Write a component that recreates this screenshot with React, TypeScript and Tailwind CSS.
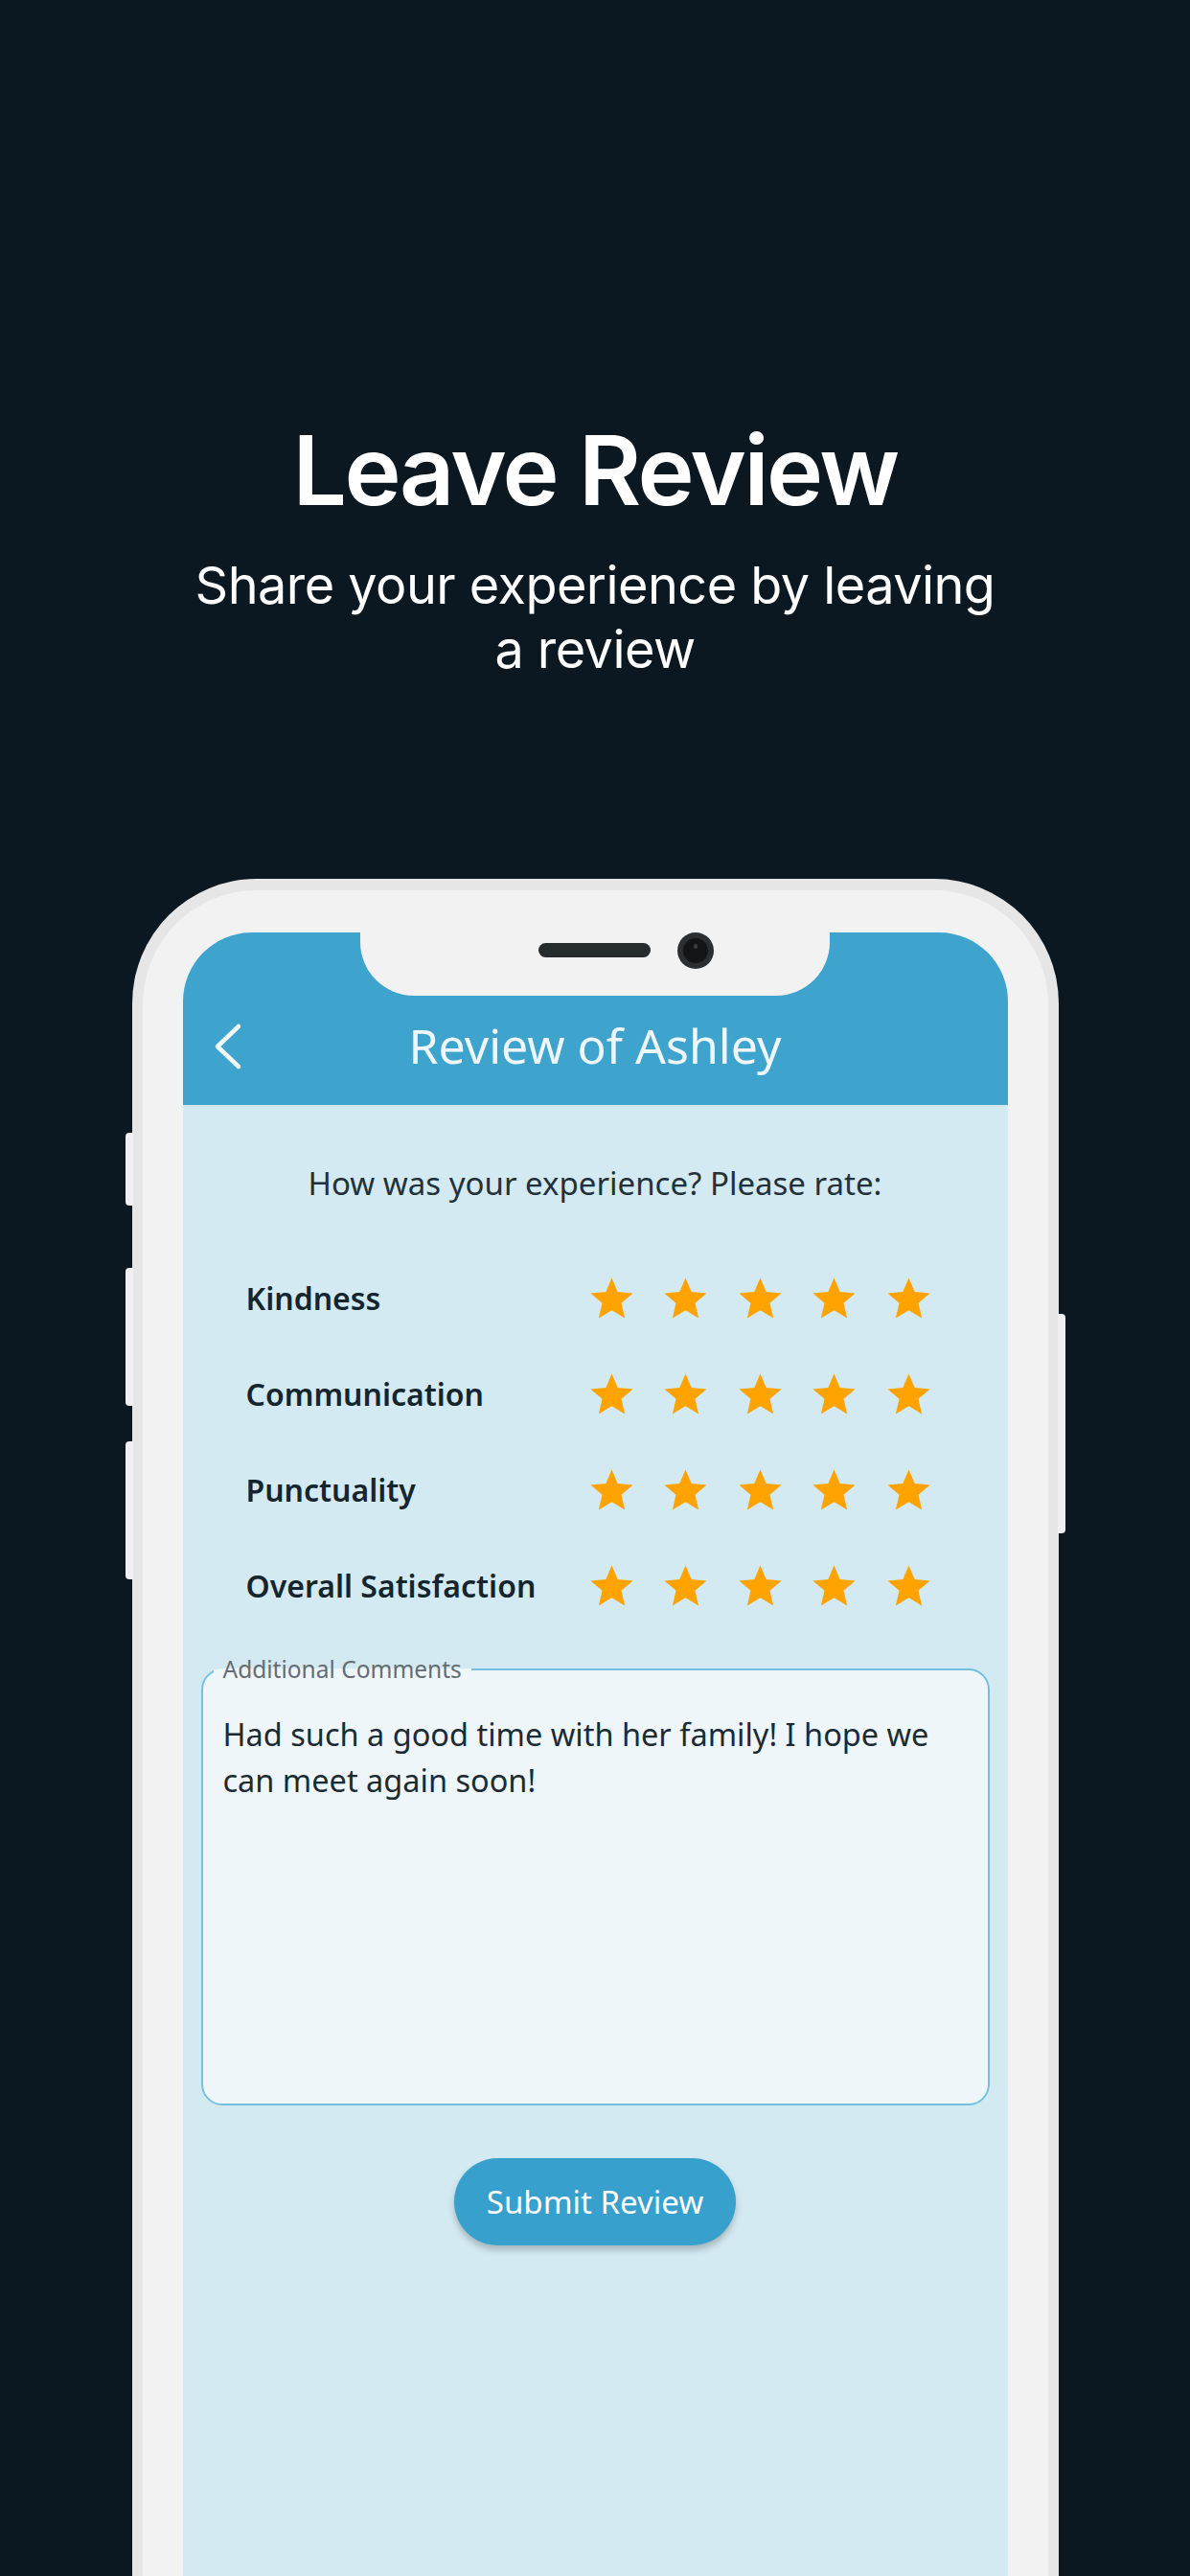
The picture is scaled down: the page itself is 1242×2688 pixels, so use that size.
import React from "react";

const ratings = ["Kindness", "Communication", "Punctuality", "Overall Satisfaction"];

const Star = () => (
  <svg width="53" height="53" viewBox="0 0 24 24" className="shrink-0">
    <path
      fill="#ffa300"
      d="M12 17.27L18.18 21l-1.64-7.03L22 9.24l-7.19-.61L12 2 9.19 8.63 2 9.24l5.46 4.73L5.82 21z"
    />
  </svg>
);

const RatingRow = ({ label }: { label: string }) => (
  <div className="flex h-[100px] items-center justify-between pl-[66px] pr-[77px]">
    <span className="text-[32px] font-semibold text-[#15252e]">{label}</span>
    <div className="flex gap-[24.5px]">
      {[0, 1, 2, 3, 4].map((i) => (
        <Star key={i} />
      ))}
    </div>
  </div>
);

const Notch = () => (
  <div className="absolute left-1/2 top-0 z-10 flex h-[66px] w-[490px] -translate-x-1/2 items-start justify-center rounded-b-[56px] bg-[#f2f2f2] pl-[64px]">
    <div className="mt-[11px] h-[15px] w-[117px] rounded-full bg-[#262b2e]" />
    <div className="ml-[28px] flex h-[38px] w-[38px] items-center justify-center rounded-full bg-[#2a2f32]">
      <div className="relative h-[26px] w-[26px] rounded-full bg-[#131618]">
        <div className="absolute left-[11px] top-[6px] h-[5px] w-[4px] rounded-full bg-[#3a4044]" />
      </div>
    </div>
  </div>
);

const Phone = () => (
  <div className="relative mt-[206px] w-[967px] shrink-0">
    {/* side buttons */}
    <div className="absolute -left-[7px] top-[265px] h-[76px] w-[8px] rounded-l-[4px] bg-[#f0f0f0]" />
    <div className="absolute -left-[7px] top-[406px] h-[144px] w-[8px] rounded-l-[4px] bg-[#f0f0f0]" />
    <div className="absolute -left-[7px] top-[587px] h-[144px] w-[8px] rounded-l-[4px] bg-[#f0f0f0]" />
    <div className="absolute -right-[7px] top-[454px] h-[229px] w-[8px] rounded-r-[4px] bg-[#f0f0f0]" />

    <div className="h-[1800px] rounded-t-[130px] bg-[#e6e6e6] px-[11px] pt-[12px]">
      <div className="h-full rounded-t-[119px] bg-[#f2f2f2] px-[42px] pt-[44px]">
        <div className="relative h-full overflow-hidden rounded-t-[72px] bg-[#d4eaf3] font-['Noto_Sans',sans-serif]">
          <Notch />
          <header className="flex h-[180px] items-end bg-[#3ea3cd]">
            <div className="relative flex h-[124px] w-full items-center justify-center">
              <svg
                className="absolute left-[30px] top-[38px]"
                width="34"
                height="50"
                viewBox="0 0 34 50"
                fill="none"
                stroke="#f2f9fc"
                strokeWidth="4.5"
                strokeLinecap="round"
                strokeLinejoin="round"
              >
                <polyline points="28,4 6,25 28,46" />
              </svg>
              <h2 className="text-[50px] font-normal leading-none text-[#eef7fb]">Review of Ashley</h2>
            </div>
          </header>

          <p className="mt-[60px] text-center text-[33px] leading-[44px] text-[#22313a]">
            How was your experience? Please rate:
          </p>

          <div className="mt-[48px]">
            {ratings.map((r) => (
              <RatingRow key={r} label={r} />
            ))}
          </div>

          <fieldset className="mx-[19px] mt-[21px] h-[471px] rounded-[22px] border-2 border-[#74c0e0] bg-[#eef6fa] px-[21px] pb-0 pt-[28px]">
            <legend className="ml-[-10px] px-[10px] text-[24.5px] leading-[32px] text-[#656d72]">
              Additional Comments
            </legend>
            <p className="text-[32.5px] leading-[48px] text-[#1c2b33]">
              Had such a good time with her family! I hope we can meet again soon!
            </p>
          </fieldset>

          <div className="mt-[55px] flex justify-center">
            <button className="h-[91px] w-[294px] rounded-full bg-[#38a0cc] text-[33px] text-white shadow-[0_5px_7px_rgba(0,0,0,0.22)]">
              Submit Review
            </button>
          </div>
        </div>
      </div>
    </div>
  </div>
);

export default function App() {
  return (
    <div className="flex h-[2688px] w-[1242px] flex-col items-center overflow-hidden bg-[#0b1821] font-['Inter',sans-serif]">
      <h1 className="mt-[441px] text-[100px] font-semibold leading-[100px] tracking-[-0.025em] text-white">
        Leave Review
      </h1>
      <p className="mt-[36px] w-[845px] text-center text-[54px] leading-[67px] tracking-[-0.01em] text-white">
        Share your experience by leaving a review
      </p>
      <Phone />
    </div>
  );
}
